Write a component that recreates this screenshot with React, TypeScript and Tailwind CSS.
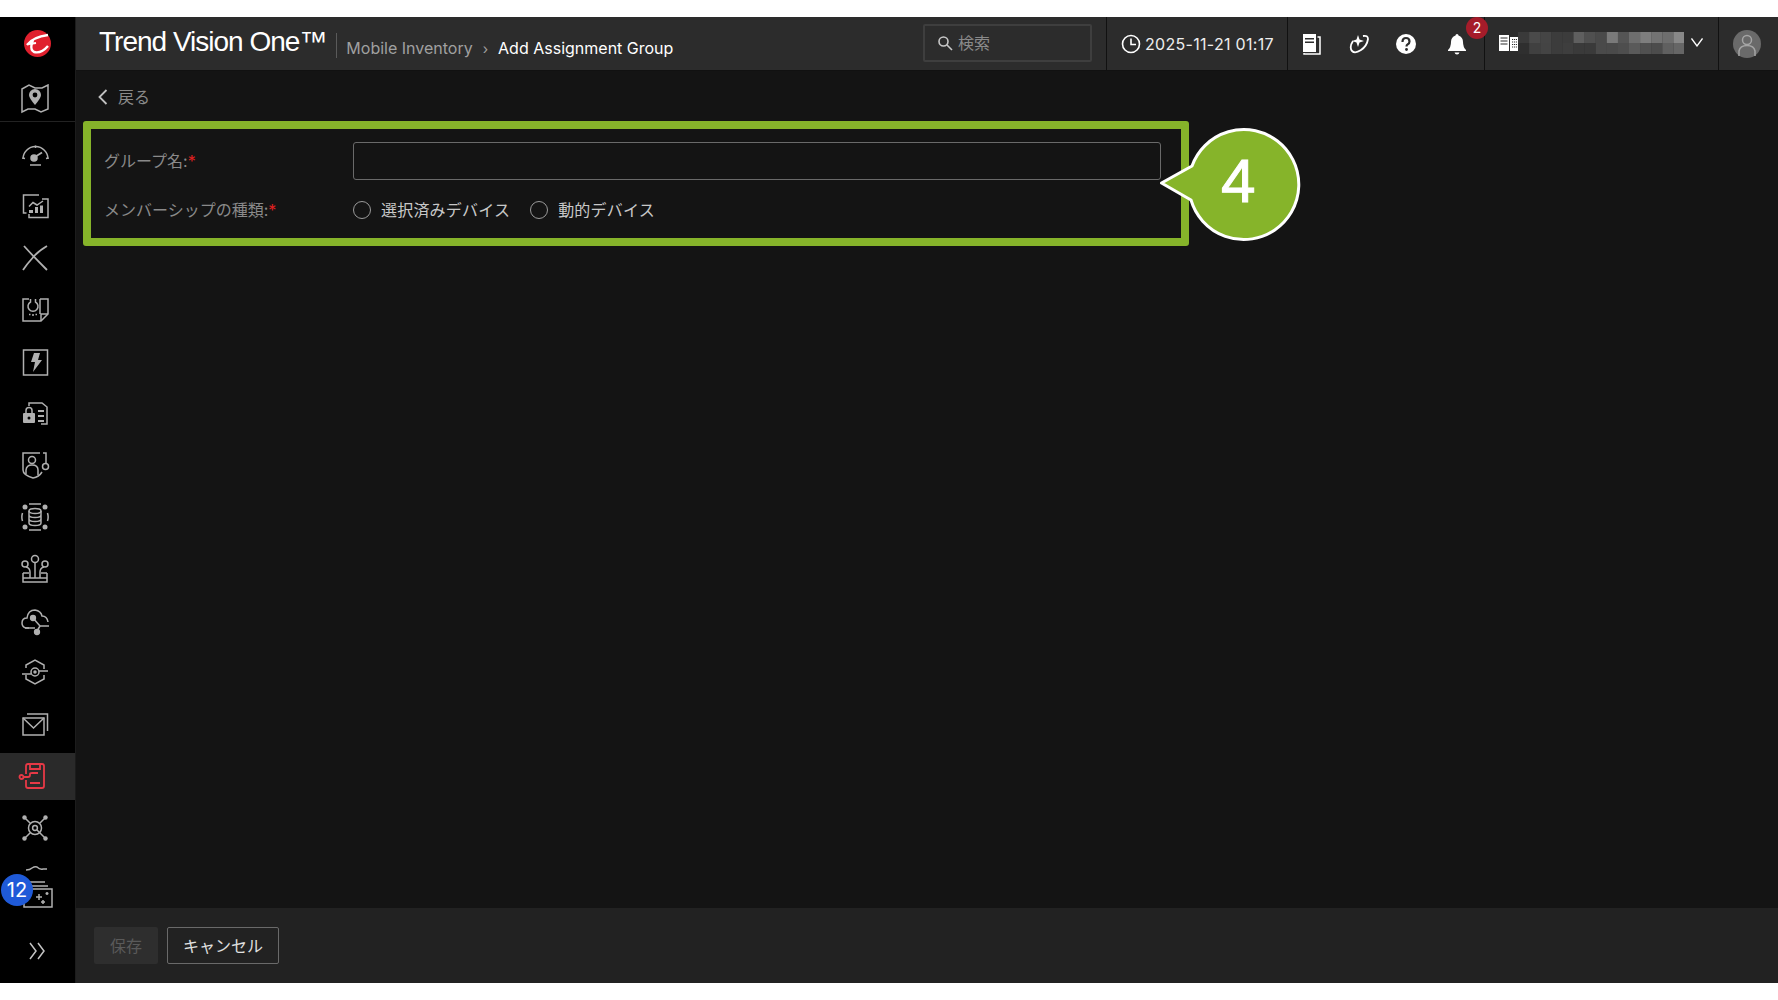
import React from "react";

const cjk = "font-['Inter','Noto_Sans_CJK_JP',sans-serif]";

interface IconProps {
  children: React.ReactNode;
  color?: string;
}

// 30x30 line icon shared by the sidebar
const NavIcon: React.FC<IconProps> = ({ children, color = "#b0b0b0" }) => (
  <svg
    width="30"
    height="30"
    viewBox="0 0 30 30"
    fill="none"
    stroke={color}
    strokeWidth="1.5"
  >
    {children}
  </svg>
);

const sideIcons: React.ReactNode[] = [
  // gauge
  <>
    <path d="M3 19 A12.500 12.500 0 0 1 28 19" />
    <path d="M2.500 18 L5 18.500 M28.500 18 L26 18.500 M15.500 5.500 V8" />
    <path d="M14 17.500 L22 12.500" strokeWidth="1.800" />
    <circle cx="14" cy="18" r="3" fill="#b0b0b0" />
    <path d="M10 25 H21" />
  </>,
  // chart
  <>
    <path d="M19 4 H3.500 V22 H6.500" />
    <path d="M22 8 H28 V26.500 H9 V23" />
    <path d="M9 15.500 L13 11.500 L17 14 L23 10" />
    <path d="M9 19 h4 v3 h-4 z M15 16 h3 v6 h-3 z M20 14.500 h3 v7.500 h-3 z" fill="#b0b0b0" stroke="none" />
  </>,
  // x mark
  <>
    <path d="M4 3 Q13 13 27 27" strokeWidth="1.800" />
    <path d="M27 3 Q17 9 12.500 15 M12.500 15 Q7 21 3 27" strokeWidth="1.800" />
  </>,
  // document with bulb
  <>
    <path d="M9 4 H3 V26 H21 L28 19 V4 H20" />
    <path d="M21 26 V19 H28 M20 4 V19" />
    <path d="M11 4 V7 A5 5 0 1 0 16 7 V4" transform="translate(-0.500 0)" />
    <path d="M9 19.500 h1.500 M13 19 v2 M15.500 19.500 h1.500" />
  </>,
  // lightning
  <>
    <path d="M3.500 3 H27.500 V28 H3.500 Z" />
    <path d="M14 6 H20 L18 13 H22 L13 25 L15 15 H11 Z" fill="#b0b0b0" stroke="none" />
  </>,
  // lock card
  <>
    <path d="M9 8 V5 H22 L27 9 V26 H21" />
    <rect x="3" y="15" width="12" height="10" rx="1" fill="#b0b0b0" stroke="none" />
    <path d="M6 15 V12.500 A3 3 0 0 1 12 12.500 V15" />
    <circle cx="9" cy="20" r="1.500" fill="#000000" stroke="none" />
    <path d="M18 13 H24 M18 18 H24 M18 23 H24" strokeWidth="2" />
  </>,
  // shield user
  <>
    <path d="M20 3 H3 V20 Q3 25 13 28 Q19 27 22 22" />
    <circle cx="12" cy="10" r="3.500" />
    <path d="M6 24 V20 Q6.500 15 12 15 Q18 15 18 20 V25" />
    <path d="M23 3 H26 V13" />
    <circle cx="25.500" cy="16.500" r="3" />
  </>,
  // database
  <>
    <ellipse cx="15" cy="9" rx="6" ry="2.500" />
    <path d="M9 9 V21 A6 2.500 0 0 0 21 21 V9 M9 13 A6 2.500 0 0 0 21 13 M9 17 A6 2.500 0 0 0 21 17" />
    <path d="M2.500 11 A13 13 0 0 0 2.500 19 M27.500 11 A13 13 0 0 1 27.500 19 M9 2 H21 M9 28 H21" />
    <circle cx="5" cy="5" r="2.500" fill="#b0b0b0" stroke="none" />
    <circle cx="25" cy="5" r="2.500" fill="#b0b0b0" stroke="none" />
    <circle cx="5" cy="25" r="2.500" fill="#b0b0b0" stroke="none" />
    <circle cx="25" cy="25" r="2.500" fill="#b0b0b0" stroke="none" />
  </>,
  // inventory nodes
  <>
    <path d="M3 19 V28 H27 V19 M3 24 H27 M3 19 H9 M21 19 H27" />
    <circle cx="15" cy="5" r="3.500" />
    <circle cx="5" cy="10" r="3" />
    <circle cx="25" cy="10" r="3" />
    <path d="M15 9 V24 M6 13 Q10 14 10 18 V24 M24 13 Q20 14 20 18 V24" />
  </>,
  // cloud
  <>
    <path d="M9 22 H6 Q2 21 2 17 Q2 12 7 12 Q8 4 15 4 Q21 5 22 10 Q27 10 28 16" />
    <circle cx="13" cy="12" r="2.400" fill="#b0b0b0" />
    <path d="M13 12 L20 20 H29 M20 20 L17 25 M5 22 H15" />
    <circle cx="17" cy="26" r="2.400" fill="#b0b0b0" />
  </>,
  // hexagon
  <>
    <path d="M6 11 V8 L15 3 L24 8 V12 M24 18 V22 L15 27 L6 22 V18" />
    <circle cx="15" cy="15" r="4" />
    <circle cx="15" cy="15" r="1" fill="#b0b0b0" />
    <path d="M2 17 H11 M19 14 H28" />
  </>,
  // mail
  <>
    <path d="M3 9 H24 V26 H3 Z" />
    <path d="M3 9 L13.500 19 L24 9" />
    <path d="M7 5 H27.500 V22" />
  </>,
  // mobile, active
  <>
    <path d="M8 13 V5 Q8 3 10 3 H24 Q26 3 26 5 V25 Q26 27 24 27 H10 Q8 27 8 25 V19" stroke="#e63946" strokeWidth="1.800" />
    <path d="M12 3 V8 H22 V3 M12 22 H22" stroke="#e63946" strokeWidth="1.800" />
    <path d="M6 16 H10 Q12 16 12 14 V13 Q12 12 14 12 H20" stroke="#e63946" strokeWidth="1.800" />
    <circle cx="3.500" cy="16" r="2" stroke="#e63946" strokeWidth="1.800" />
  </>,
  // network
  <>
    <circle cx="15" cy="15" r="6.500" />
    <circle cx="15" cy="15" r="2.400" />
    <path d="M5 5 L10 10 M25 5 L20 10 M5 25 L10 20 M17 17 L25 25" />
    <circle cx="4.500" cy="4.500" r="2.200" fill="#b0b0b0" stroke="none" />
    <circle cx="25.500" cy="4.500" r="2.200" fill="#b0b0b0" stroke="none" />
    <circle cx="4.500" cy="25.500" r="2.200" fill="#b0b0b0" stroke="none" />
    <circle cx="25.500" cy="25.500" r="2.200" fill="#b0b0b0" stroke="none" />
  </>,
];

const mosaicTop = ["#3a3a3a", "#4a4a4a", "#454545", "#3c3c3c", "#3c3c3c", "#5f5f5f", "#505050", "#4a4a4a", "#7a7a7a", "#555555", "#6e6e6e", "#7e7e7e", "#737373", "#6e6e6e", "#888888"];
const mosaicBottom = ["#2f2f2f", "#404040", "#444444", "#3c3c3c", "#3e3e3e", "#3a3a3a", "#3a3a3a", "#4a4a4a", "#4a4a4a", "#4e4e4e", "#5a5a5a", "#505050", "#4c4c4c", "#606060", "#666666"];

const Sidebar = () => (
  <aside className="w-[76px] shrink-0 bg-black flex flex-col border-r border-[#1c1c1c]">
    <div className="h-[53px] flex items-center justify-center">
      <svg width="27" height="27" viewBox="0 0 27 27">
        <circle cx="13.500" cy="13.500" r="13.500" fill="#e0202e" />
        <path d="M3 15 Q9 7 24 5" fill="none" stroke="#ffffff" strokeWidth="2.400" />
        <path d="M9 10 L7.500 15 Q6.500 20 10 22 Q17 24 24 16" fill="none" stroke="#ffffff" strokeWidth="2.400" />
        <path d="M5 14 L12 13" fill="none" stroke="#ffffff" strokeWidth="2" />
      </svg>
    </div>
    <div className="h-[52px] flex items-center justify-center pt-[6px] pr-[6px] border-b border-[#222222]">
      <svg width="30" height="30" viewBox="0 0 30 30" fill="none" stroke="#b0b0b0" strokeWidth="1.500">
        <path d="M2 5 L9 1 L15 4 L22 4 L28 1 V25 L21 28 L15 25 L8 25 L2 28 Z" />
        <path d="M15 21 Q9 14 9 11 A6 6 0 0 1 21 11 Q21 14 15 21 Z" fill="#b0b0b0" stroke="none" />
        <circle cx="15" cy="11" r="2.400" fill="#000000" stroke="none" />
      </svg>
    </div>
    <nav className="flex flex-col gap-[4.8px] pt-[9px]">
      {sideIcons.map((icon, i) => (
        <div
          key={i}
          className={
            i === 12
              ? "h-[47px] bg-[#2a2a2a] flex items-center justify-center pr-[10px]"
              : "h-[47px] flex items-center justify-center pr-[6px]"
          }
        >
          <NavIcon>{icon}</NavIcon>
        </div>
      ))}
    </nav>
    <div className="relative h-[48px] flex justify-center pt-[14px] pl-[1px]">
      <svg width="30" height="44" viewBox="0 0 30 44" fill="none" stroke="#b0b0b0" strokeWidth="1.500">
        <path d="M3 5 Q7 5 9 3 Q12 1 14 2 Q17 5 20 4 H24" />
        <path d="M5 17 H22 M6 21 H25" />
        <path d="M1 24 H29 V42 H1 Z" />
        <path d="M16 29 v6 M13 32 h6 M24 27 v3 M22.500 28.500 h3 M20 35 v4 M18 37 h4" />
      </svg>
      <span className={`absolute left-[1px] top-[23px] w-[32px] h-[32px] rounded-full bg-[#1f5ad8] text-white text-[20px] leading-[32px] text-center ${cjk}`}>
        12
      </span>
    </div>
    <div className="mt-auto h-[54px] flex items-start justify-center pt-[13px] pr-[1px]">
      <svg width="16" height="18" viewBox="0 0 16 18" fill="none" stroke="#c4c4c4" strokeWidth="1.500">
        <path d="M1 1 L7 9 L1 17 M9 1 L15 9 L9 17" />
      </svg>
    </div>
  </aside>
);

const Header = () => (
  <header className={`h-[54px] shrink-0 bg-[#2c2c2c] border-b border-[#111111] flex items-stretch ${cjk}`}>
    <div className="w-[847px] flex items-center">
      <span className="ml-[23px] text-white text-[28px] tracking-[-1px] font-['Liberation_Sans',sans-serif] mt-[-2px] mb-[2px] h-[32px] leading-[32px]">
        Trend Vision One™
      </span>
      <span className="ml-[10px] w-px h-[25px] bg-[#5a5a5a] mt-[3px]" />
      <span className="ml-[9px] text-[16px] text-[#a0a0a0] mt-[9px]">Mobile Inventory</span>
      <span className="ml-[10px] text-[14px] text-[#a0a0a0] mt-[9px]">›</span>
      <span className="ml-[10px] text-[16px] text-white mt-[9px]">Add Assignment Group</span>
    </div>
    <div className="w-[184px] flex items-center border-r border-[#111111]">
      <div className="w-[169px] h-[38px] border-2 border-[#3e3e3e] rounded-[2px] flex items-center pl-[12px] gap-[5px] mb-[2px]">
        <svg width="16" height="16" viewBox="0 0 16 16" fill="none" stroke="#c8c8c8" strokeWidth="1.600">
          <circle cx="6.500" cy="6.500" r="4.500" />
          <path d="M10 10 L15 15" />
        </svg>
        <span className="text-[16px] text-[#8a8a8a]">検索</span>
      </div>
    </div>
    <div className="w-[181px] flex items-center pl-[14px] gap-[4px] border-r border-[#111111]">
      <svg width="20" height="20" viewBox="0 0 20 20" fill="none" stroke="#ffffff" strokeWidth="1.600">
        <circle cx="10" cy="10" r="8.500" />
        <path d="M10 4.500 V10.500 H15" />
      </svg>
      <span className="text-[16px] tracking-[0.3px] text-[#eeeeee] whitespace-nowrap">2025-11-21 01:17</span>
    </div>
    <div className="w-[197px] relative flex items-center border-r border-[#111111]">
      <svg className="ml-[13px]" width="20" height="22" viewBox="0 0 20 22">
        <path d="M2 1 H15 V19 H2 Z" fill="#ffffff" />
        <path d="M4 5 H13 V6.500 H4 Z M4 8.500 H13 V10 H4 Z" fill="#2c2c2c" />
        <path d="M16.500 4 H19 V21 H3 V20" fill="none" stroke="#ffffff" strokeWidth="1.500" />
      </svg>
      <svg className="ml-[27px]" width="22" height="22" viewBox="0 0 22 22" fill="none" stroke="#ffffff" strokeWidth="1.800">
        <path d="M5 8 Q1 14 4 18 Q7 21 13 17 Q19 13 20 6 Q20 2 15 3" />
        <path d="M10 2 L11.500 6.500 L16 8 L11.500 9.500 L10 14 L8.500 9.500 L4 8 L8.500 6.500 Z" fill="#ffffff" stroke="none" />
      </svg>
      <svg className="ml-[26px]" width="20" height="20" viewBox="0 0 20 20">
        <circle cx="10" cy="10" r="10" fill="#ffffff" />
        <path d="M6.500 8 Q6.500 4 10 4 Q13.500 4 13.500 7.500 Q13.500 9.500 11.500 10.500 Q10.500 11 10.500 12.500" fill="none" stroke="#2c2c2c" strokeWidth="2.200" />
        <circle cx="10.500" cy="15.500" r="1.400" fill="#2c2c2c" />
      </svg>
      <svg className="ml-[31px]" width="20" height="22" viewBox="0 0 20 22">
        <path d="M10 1 Q11.500 1 11.500 2.500 Q16 4 16 9 Q16 14 19 17 V18 H1 V17 Q4 14 4 9 Q4 4 8.500 2.500 Q8.500 1 10 1 Z" fill="#ffffff" />
        <path d="M7.500 19.500 H12.500 Q12 21.500 10 21.500 Q8 21.500 7.500 19.500 Z" fill="#ffffff" />
      </svg>
      <span className="absolute left-[178px] top-0 w-[22px] h-[22px] rounded-full bg-[#a51c2a] text-white text-[14px] leading-[22px] text-center">
        2
      </span>
    </div>
    <div className="w-[234px] flex items-center pl-[14px] border-r border-[#111111] pb-[1px]">
      <svg width="20" height="16" viewBox="0 0 20 16">
        <path d="M0 0 H10 V16 H0 Z" fill="#ffffff" />
        <path d="M1.500 3 H8.500 M1.500 6 H8.500 M1.500 9 H8.500" stroke="#2c2c2c" strokeWidth="1.200" />
        <path d="M11 2 H20 V16 H11 Z" fill="#ffffff" />
        <path d="M13 4.500 H18 M13 7 H18 M13 9.500 H18 M13 12 H18" stroke="#2c2c2c" strokeWidth="1.200" strokeDasharray="1.200 0.800" />
      </svg>
      <svg className="ml-[-1px]" width="166" height="22" viewBox="0 0 166 22">
        {mosaicTop.map((c, i) => (
          <rect key={i} x={i * 11.1} y="0" width="11.2" height="11" fill={c} />
        ))}
        {mosaicBottom.map((c, i) => (
          <rect key={i} x={i * 11.1} y="11" width="11.2" height="11" fill={c} />
        ))}
      </svg>
      <svg className="ml-[7px] mb-[2px]" width="12" height="9" viewBox="0 0 12 9" fill="none" stroke="#ffffff" strokeWidth="1.300">
        <path d="M0.500 0.500 L6 8 L11.500 0.500" />
      </svg>
    </div>
    <div className="flex-1 flex items-center justify-center pr-[3px]">
      <svg width="28" height="28" viewBox="0 0 28 28">
        <circle cx="14" cy="14" r="14" fill="#6a6a6a" />
        <circle cx="14" cy="10" r="4.500" fill="none" stroke="#a5a5a5" strokeWidth="1.500" />
        <path d="M6 26 V21 Q7 15.500 14 15.500 Q21 15.500 22 21 V26" fill="none" stroke="#a5a5a5" strokeWidth="1.500" />
      </svg>
    </div>
  </header>
);

const Radio = ({ label }: { label: string }) => (
  <label className="flex items-center gap-[10px]">
    <span className="w-[18px] h-[18px] rounded-full border border-[#9a9a9a]" />
    <span className="text-[16px] tracking-[0.2px] text-[#c8c8c8]">{label}</span>
  </label>
);

const RequiredLabel = ({ text }: { text: string }) => (
  <span className="w-[249px] text-[16px] text-[#8a8a8a]">
    {text}:<span className="text-[#e02020]">*</span>
  </span>
);

const App = () => (
  <div className="h-screen bg-white pt-[17px] pb-[17px]">
    <div className="h-full flex bg-[#141414]">
      <Sidebar />
      <div className="flex-1 flex flex-col min-w-0">
        <Header />
        <main className={`flex-1 min-h-0 ${cjk}`}>
          <div className="h-[50px] flex items-center pl-[22px] gap-[10px] pt-[1px]">
            <svg width="10" height="16" viewBox="0 0 10 16" fill="none" stroke="#c0c0c0" strokeWidth="1.800">
              <path d="M8.500 1 L1.500 8 L8.500 15" />
            </svg>
            <span className="text-[16px] text-[#8a8a8a]">戻る</span>
          </div>
          <div className="relative ml-[7px] w-[1106px] h-[125px] border-8 border-[#86b42a] rounded-[3px] pl-[13px] pt-[13px]">
            <div className="flex items-center h-[38px]">
              <RequiredLabel text="グループ名" />
              <div className="w-[808px] h-[38px] border border-[#6a6a6a] rounded-[3px]" />
            </div>
            <div className="flex items-center gap-[20px] h-[24px] mt-[18px]">
              <div className="flex items-center">
                <RequiredLabel text="メンバーシップの種類" />
                <Radio label="選択済みデバイス" />
              </div>
              <Radio label="動的デバイス" />
            </div>
            {/* step callout */}
            <div className="absolute left-[1069px] top-[-16px] w-[145px] h-[130px]">
              <svg width="145" height="130" viewBox="0 0 145 130">
                <path
                  d="M1.500 70 L32 53 A55 55 0 1 1 31 87 Z"
                  fill="#86b42a"
                  stroke="#ffffff"
                  strokeWidth="3"
                  strokeLinejoin="round"
                />
              </svg>
              <span className="absolute left-[61px] top-[33px] text-white text-[62px] leading-[70px] [-webkit-text-stroke:1px_white] font-['Liberation_Sans',sans-serif]">
                4
              </span>
            </div>
          </div>
        </main>
        <footer className={`h-[75px] shrink-0 bg-[#222222] flex items-center pl-[18px] gap-[9px] ${cjk}`}>
          <button className="w-[64px] h-[37px] bg-[#2e2e2e] rounded-[2px] text-[16px] text-[#5a5a5a]">保存</button>
          <button className="w-[112px] h-[37px] border border-[#6a6a6a] rounded-[2px] text-[16px] text-[#e0e0e0]">キャンセル</button>
        </footer>
      </div>
    </div>
  </div>
);

export default App;
